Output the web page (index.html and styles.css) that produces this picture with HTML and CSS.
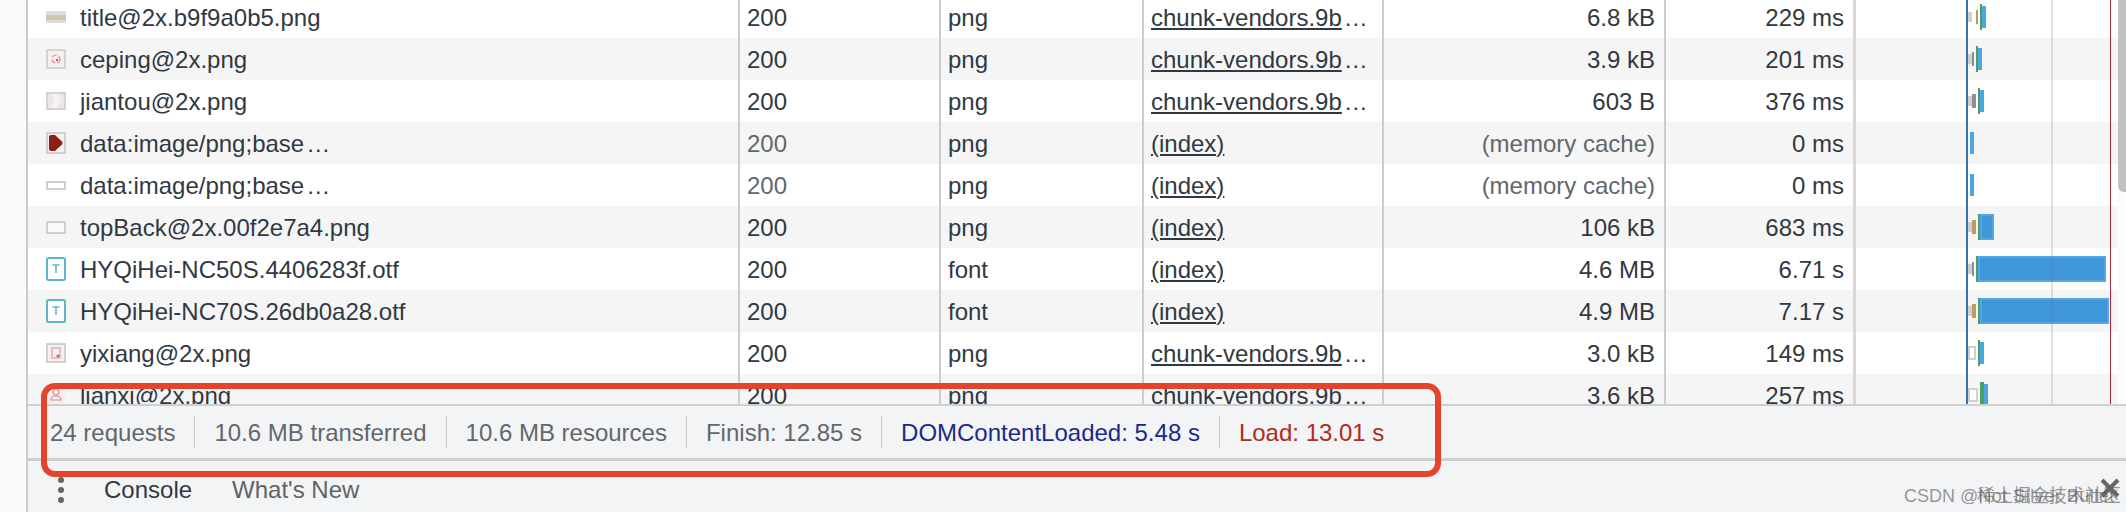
FILE: index.html
```html
<!DOCTYPE html>
<html lang="en">
<head>
<meta charset="utf-8">
<title>Network</title>
<link rel="stylesheet" href="styles.css">
</head>
<body>
<div class="gutter"></div>
<main class="panel">
  <section class="table">
    <div class="rows">
      <div class="row">
        <div class="cell name"><svg class="ico" width="20" height="12" viewBox="0 0 20 12"><rect width="20" height="12" fill="#dcdcdc"/><rect y="4" width="20" height="5" fill="#cfcaa6"/></svg><span>title@2x.b9f9a0b5.png</span></div>
        <div class="cell">200</div><div class="cell">png</div><div class="cell"><span class="ell"><a>chunk-vendors.9b</a><span class="more">…</span></span></div><div class="cell num">6.8 kB</div><div class="cell num">229 ms</div>
        <div class="wf"><i class="b q" style="width:4px"></i><i class="b o" style="margin-left:4px;width:2px"></i><i class="b g" style="margin-left:2px;width:2px"></i><i class="b c" style="width:4px"></i></div>
      </div>
      <div class="row alt">
        <div class="cell name"><svg class="ico" width="20" height="20" viewBox="0 0 20 20"><rect x="1" y="1" width="18" height="18" fill="#f6efef" stroke="#d4d4d4" stroke-width="2"/><circle cx="10" cy="10" r="4" fill="none" stroke="#d98d98" stroke-width="1.2" stroke-dasharray="5 2"/><circle cx="11" cy="11" r="1.2" fill="#c06070"/></svg><span>ceping@2x.png</span></div>
        <div class="cell">200</div><div class="cell">png</div><div class="cell"><span class="ell"><a>chunk-vendors.9b</a><span class="more">…</span></span></div><div class="cell num">3.9 kB</div><div class="cell num">201 ms</div>
        <div class="wf"><i class="b q" style="width:4px"></i><i class="b d" style="width:2px"></i><i class="b g" style="margin-left:2px;width:2px"></i><i class="b c" style="width:4px"></i></div>
      </div>
      <div class="row">
        <div class="cell name"><svg class="ico" width="20" height="18" viewBox="0 0 20 18"><rect x="1" y="1" width="18" height="16" fill="#ebe6e8" stroke="#d4d4d4" stroke-width="2"/><path d="M5 2H11L15 9L11 16H5L9 9Z" fill="#f6f3f4"/></svg><span>jiantou@2x.png</span></div>
        <div class="cell">200</div><div class="cell">png</div><div class="cell"><span class="ell"><a>chunk-vendors.9b</a><span class="more">…</span></span></div><div class="cell num">603 B</div><div class="cell num">376 ms</div>
        <div class="wf"><i class="b q" style="width:4px"></i><i class="b d" style="width:4px"></i><i class="b g" style="margin-left:2px;width:2px"></i><i class="b c" style="width:4px"></i></div>
      </div>
      <div class="row alt">
        <div class="cell name"><svg class="ico" width="20" height="22" viewBox="0 0 20 22"><rect x="1" y="1" width="18" height="20" fill="#f4f2f1" stroke="#d0d0d0" stroke-width="2"/><path d="M3 5Q3 3 5 3H9L16 9.500Q17 11 16 12.500L9 19H5Q3 19 3 17Z" fill="#8e1f14"/></svg><span>data:image/png;base<span class="more">…</span></span></div>
        <div class="cell dim">200</div><div class="cell">png</div><div class="cell"><span class="ell"><a>(index)</a></span></div><div class="cell num dim">(memory cache)</div><div class="cell num">0 ms</div>
        <div class="wf"><i class="b c" style="margin-left:2px;width:4px"></i></div>
      </div>
      <div class="row">
        <div class="cell name"><svg class="ico" width="20" height="9" viewBox="0 0 20 9"><rect x="1" y="1" width="18" height="7" fill="#fff" stroke="#d0d0d0" stroke-width="2"/></svg><span>data:image/png;base<span class="more">…</span></span></div>
        <div class="cell dim">200</div><div class="cell">png</div><div class="cell"><span class="ell"><a>(index)</a></span></div><div class="cell num dim">(memory cache)</div><div class="cell num">0 ms</div>
        <div class="wf"><i class="b c" style="margin-left:2px;width:4px"></i></div>
      </div>
      <div class="row alt">
        <div class="cell name"><svg class="ico" width="20" height="13" viewBox="0 0 20 13"><rect x="1" y="1" width="18" height="11" fill="#fafafa" stroke="#d0d0d0" stroke-width="2"/></svg><span>topBack@2x.00f2e7a4.png</span></div>
        <div class="cell">200</div><div class="cell">png</div><div class="cell"><span class="ell"><a>(index)</a></span></div><div class="cell num">106 kB</div><div class="cell num">683 ms</div>
        <div class="wf"><i class="b q" style="width:4px"></i><i class="b o" style="width:4px"></i><i class="b g" style="margin-left:2px;width:2px"></i><i class="b c tall" style="width:14px"></i></div>
      </div>
      <div class="row">
        <div class="cell name"><svg class="ico" width="20" height="24" viewBox="0 0 20 24"><rect x="1" y="1" width="18" height="22" rx="1.500" fill="#fff" stroke="#5fb4cb" stroke-width="2"/><path d="M6.500 8H13.500M10 8V16" fill="none" stroke="#5fb4cb" stroke-width="1.600"/></svg><span>HYQiHei-NC50S.4406283f.otf</span></div>
        <div class="cell">200</div><div class="cell">font</div><div class="cell"><span class="ell"><a>(index)</a></span></div><div class="cell num">4.6 MB</div><div class="cell num">6.71 s</div>
        <div class="wf"><i class="b q" style="width:4px"></i><i class="b d" style="width:2px"></i><i class="b g" style="margin-left:2px;width:2px"></i><i class="b c tall" style="width:128px"></i></div>
      </div>
      <div class="row alt">
        <div class="cell name"><svg class="ico" width="20" height="24" viewBox="0 0 20 24"><rect x="1" y="1" width="18" height="22" rx="1.500" fill="#fff" stroke="#5fb4cb" stroke-width="2"/><path d="M6.500 8H13.500M10 8V16" fill="none" stroke="#5fb4cb" stroke-width="1.600"/></svg><span>HYQiHei-NC70S.26db0a28.otf</span></div>
        <div class="cell">200</div><div class="cell">font</div><div class="cell"><span class="ell"><a>(index)</a></span></div><div class="cell num">4.9 MB</div><div class="cell num">7.17 s</div>
        <div class="wf"><i class="b q" style="width:4px"></i><i class="b o" style="width:4px"></i><i class="b g" style="margin-left:2px;width:2px"></i><i class="b c tall" style="width:129px"></i></div>
      </div>
      <div class="row">
        <div class="cell name"><svg class="ico" width="20" height="20" viewBox="0 0 20 20"><rect x="1" y="1" width="18" height="18" fill="#f6efef" stroke="#d0d0d0" stroke-width="2"/><rect x="6" y="5" width="8" height="10" fill="none" stroke="#d9a0a8" stroke-width="1.200"/><circle cx="12" cy="13" r="1.600" fill="#c06070"/></svg><span>yixiang@2x.png</span></div>
        <div class="cell">200</div><div class="cell">png</div><div class="cell"><span class="ell"><a>chunk-vendors.9b</a><span class="more">…</span></span></div><div class="cell num">3.0 kB</div><div class="cell num">149 ms</div>
        <div class="wf"><i class="b h" style="width:8px"></i><i class="b g" style="margin-left:2px;width:2px"></i><i class="b c" style="width:4px"></i></div>
      </div>
      <div class="row alt">
        <div class="cell name"><svg class="ico" width="20" height="20" viewBox="0 0 20 20"><rect width="20" height="20" fill="#f9eeee"/><circle cx="10" cy="7" r="3" fill="none" stroke="#d08d98" stroke-width="1.200"/><path d="M5 15Q5 11 10 11T15 15Z" fill="none" stroke="#d08d98" stroke-width="1.200"/></svg><span>lianxi@2x.png</span></div>
        <div class="cell">200</div><div class="cell">png</div><div class="cell"><span class="ell">chunk-vendors.9b<span class="more">…</span></span></div><div class="cell num">3.6 kB</div><div class="cell num">257 ms</div>
        <div class="wf"><i class="b h" style="width:10px"></i><i class="b g" style="margin-left:2px;width:4px"></i><i class="b c" style="width:4px"></i></div>
      </div>
    </div>
    <div class="mark blue"></div>
    <div class="mark grey"></div>
    <div class="mark red"></div>
    <div class="thumb"></div>
  </section>
  <footer class="status">
    <span class="stat">24 requests</span>
    <span class="stat">10.6 MB transferred</span>
    <span class="stat">10.6 MB resources</span>
    <span class="stat">Finish: 12.85 s</span>
    <span class="stat dcl">DOMContentLoaded: 5.48 s</span>
    <span class="stat load">Load: 13.01 s</span>
  </footer>
  <nav class="drawer">
    <span class="dots"><i></i><i></i><i></i></span>
    <span class="tab on">Console</span>
    <span class="tab">What's New</span>
    <svg class="close" width="20" height="20" viewBox="0 0 20 20"><path d="M2 2L18 18M18 2L2 18" fill="none" stroke="#666" stroke-width="4"/></svg>
  </nav>
</main>
<div class="callout"></div>
<div class="wm"><span>CSDN @</span><span class="wm1">Not Silver Bullet</span><span class="wm2">稀土掘金技术社区</span></div>
</body>
</html>
```

FILE: styles.css
```css
html, body {
  margin: 0;
  height: 512px;
  overflow: hidden;
}
body {
  display: flex;
  position: relative;
  background: #f8f9fa;
  font-family: "Liberation Sans", Arial, sans-serif;
  color: #303942;
}
.gutter {
  width: 26px;
  flex: none;
  background: #f9fafa;
}
.panel {
  flex: 1;
  display: flex;
  flex-direction: column;
  min-width: 0;
  border-left: 2px solid #cbcbcb;
}
.table {
  position: relative;
  height: 404px;
  flex: none;
  overflow: hidden;
  background: #fbfcfc;
}
.rows {
  margin-top: -4px;
  width: 2090px;
}
.row {
  display: grid;
  grid-template-columns: 710px 201px 203px 240px 282px 189px 257px;
  height: 42px;
  align-items: stretch;
  background: #fff;
}
.row.alt {
  background: #f5f5f6;
}
.cell {
  display: flex;
  align-items: center;
  padding: 2px 8px 0 7px;
  border-left: 2px solid #cdcdcd;
  font-size: 24px;
  line-height: 36px;
  white-space: nowrap;
  overflow: hidden;
  box-sizing: border-box;
}
.cell.name {
  border-left: 0;
  padding-left: 18px;
  gap: 14px;
  font-kerning: none;
}
.ico {
  flex: none;
  margin-top: -2px;
}
.num {
  justify-content: flex-end;
  padding-right: 9px;
}
.dim {
  color: #62676c;
}
.cell a {
  text-decoration: underline;
  text-decoration-thickness: 2px;
  text-underline-offset: 2px;
}
.more {
  margin-left: 2px;
}
.wf {
  display: flex;
  align-items: center;
  padding-left: 112px;
  border-left: 3px solid #d8d8d8;
  box-sizing: border-box;
}
.b {
  display: block;
  flex: none;
}
.q { height: 10px; background: #cfcfcf; }
.o { height: 14px; background: #c09a63; }
.d { height: 14px; background: #8f8f8f; }
.g { height: 26px; background: #4c9f63; }
.c { height: 22px; background: #4ea5e3; }
.c.tall { height: 26px; background: #3f96d8; border: 2px solid #54a7e4; box-sizing: border-box; }
.h { height: 14px; border: 2px solid #cfcfcf; background: #fff; box-sizing: border-box; }
.mark {
  position: absolute;
  top: 0;
  bottom: 0;
}
.blue { left: 1938px; width: 2px; background: #3a71a8; }
.grey { left: 2023px; width: 2px; background: rgba(110, 110, 110, 0.2); }
.red { left: 2082px; width: 1px; background: #a8283a; }
.thumb {
  position: absolute;
  top: 0;
  right: 0;
  width: 8px;
  height: 192px;
  background: #c2c2c2;
  border-bottom-left-radius: 6px;
}
.status {
  flex: none;
  height: 54px;
  box-sizing: border-box;
  display: flex;
  align-items: center;
  padding: 0 0 0 22px;
  background: #f3f4f6;
  border-top: 2px solid #cfcfcf;
  font-size: 24px;
  color: #62676c;
}
.stat {
  padding: 0 19px;
  height: 32px;
  line-height: 34px;
  border-left: 1px solid #c9c9c9;
  white-space: nowrap;
}
.stat:first-child {
  border-left: 0;
  padding-left: 0;
}
.dcl { color: #1a2a8c; }
.load { color: #b02a20; }
.drawer {
  flex: 1;
  display: flex;
  align-items: center;
  position: relative;
  padding-top: 6px;
  background: #f3f4f6;
  border-top: 3px solid #cfcfcf;
  font-size: 24px;
  color: #5f6368;
}
.dots {
  display: flex;
  flex-direction: column;
  gap: 4px;
  margin-left: 30px;
  width: 6px;
}
.dots i {
  width: 6px;
  height: 6px;
  border-radius: 50%;
  background: #666;
}
.tab {
  margin-left: 40px;
  white-space: nowrap;
}
.tab.on {
  color: #303942;
}
.close {
  position: absolute;
  right: 6px;
  top: 17px;
}
.callout {
  position: absolute;
  left: 41px;
  top: 383px;
  width: 1400px;
  height: 94px;
  box-sizing: border-box;
  border: 6px solid #e4432c;
  border-radius: 14px;
}
.wm {
  position: absolute;
  left: 1904px;
  top: 486px;
  font-size: 18px;
  line-height: 20px;
  white-space: nowrap;
  color: rgba(95, 95, 95, 0.65);
  font-family: "Liberation Sans", "Noto Sans CJK SC", sans-serif;
}
.wm1 {
  letter-spacing: 0.5px;
}
.wm2 {
  position: absolute;
  left: 73px;
  top: 0;
}
```
